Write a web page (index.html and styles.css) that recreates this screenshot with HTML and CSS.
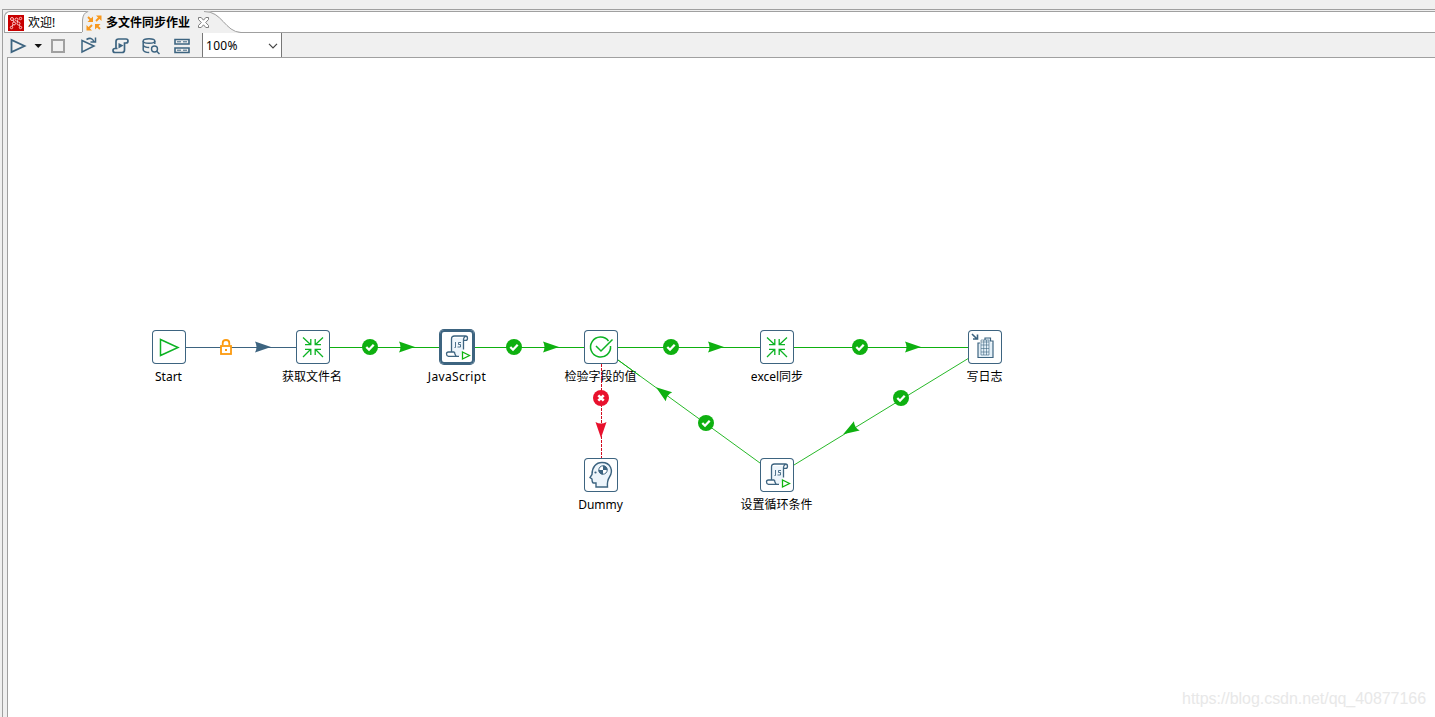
FILE: index.html
```html
<!DOCTYPE html>
<html lang="zh-CN">
<head>
<meta charset="utf-8">
<title>多文件同步作业</title>
<link rel="stylesheet" href="styles.css">
</head>
<body>
<svg class="defs" width="0" height="0">
  <defs>
    <symbol id="arrows-in" viewBox="0 0 34 34">
      <path class="green-stroke thin" d="M7 7.500l7.500 7M9 14.700h5.800V9M27 7.500l-7.500 7M25 14.700h-5.800V9M7 27l7.500-7.500M9 19.300h5.800V25M27 27l-7.500-7.500M25 19.300h-5.800V25"/>
    </symbol>
    <symbol id="js-script" viewBox="0 0 34 34">
      <path d="M12 8h11v13l-3 5h-5l-3-4z" fill="#edf5fb"/>
      <path class="blue-stroke thin" d="M11.500 21.500V9q0-3 3-3H25.500q2 0 2 2.200t-2 2.200h-2V9.500q0-1.800 1.800-3M23.500 10v9.500M14.500 22H8.500q-2 0-2 2t2 2.300H19M14.500 22q0 2 1.500 4"/>
      <path d="M15.500 12v5.500h-1M21 12.500h-2.500v2h2v2.500h-3" fill="none" stroke="#3d6480" stroke-width=".9"/>
      <path d="M22.500 22v7l7-3.500z" fill="#fff" stroke="#0db30d" stroke-width="1.300"/>
    </symbol>
    <symbol id="ok" viewBox="0 0 16 16">
      <circle cx="8" cy="8" r="8" fill="#0eb010"/>
      <path d="M4.300 8l2.700 2.700 4.700-5" fill="none" stroke="#fff" stroke-width="2.300"/>
    </symbol>
    <path id="head" d="M8 0L-8-5.500Q-5 0-8 5.500z"/>
  </defs>
</svg>
<div class="window">
  <div class="editor">
    <div class="tabs">
      <div class="tab tab-welcome">
        <svg width="16" height="16" viewBox="0 0 16 16"><path fill="#c80000" d="M0 0h16v16H0z"/><g fill="none" stroke="#ffc9c9"><circle cx="4" cy="4" r="1.500"/><circle cx="8.500" cy="4.500" r="1.500"/><circle cx="12.500" cy="3.500" r="1.200"/><circle cx="6" cy="8.500" r="1.500"/><circle cx="10.500" cy="8.500" r="1.500"/><circle cx="3.500" cy="12.500" r="1.200"/><circle cx="12.500" cy="12.500" r="1.200"/><path d="M5 9.500l-1 2M11 10l1 1.500M5 5l1 2M9 6l1 1"/></g></svg>
        <span>欢迎!</span>
      </div>
      <div class="tab tab-active">
        <svg class="tab-shape" width="165" height="22" viewBox="0 0 165 22"><path fill="#f0f0f0" d="M0 22V9Q1 0 8 0h116C141 0 143 21 159 21.500V22z"/><path fill="none" stroke="#a0a0a0" d="M.5 21V9Q1 2 6 .500M122 .500C140 0 143 21 159 21.500h6"/></svg>
        <svg class="tab-icon" width="16" height="16" viewBox="0 0 16 16"><path d="M2 2l4 4M10 6l4-4M6 10l-4 4M10 10l4 4" fill="none" stroke="#f8981d" stroke-width="1.900"/><path fill="#f8981d" d="M7 1.500V7H1.500zM10 .500h5.500V6zM.5 10v5.500H6zM9 9h5.500L9 14.500z"/></svg>
        <span class="tab-title">多文件同步作业</span>
        <svg class="tab-close" width="11" height="11" viewBox="0 0 11 11"><path fill="#fff" stroke="#707070" stroke-width=".9" d="M.5.500h2.700l2.300 2.700L7.800.500h2.700v2L7.700 5.500l2.800 3v2H7.800L5.500 7.800l-2.300 2.700H.5v-2l2.800-3L.5 2.500z"/></svg>
      </div>
    </div>
    <div class="toolbar">
      <svg class="tools" width="191" height="24" viewBox="0 0 191 24">
        <g fill="none" stroke="#3d6480" stroke-width="1.800">
          <path d="M4.500 7v12l13-6z"/>
          <path d="M75 7.500v11.500l12-6zM79.500 6.500q5-3 7.500 2M88.500 4.500v4.500h-5" stroke-width="1.500"/>
          <path d="M109 15.500V8.500q0-2.500 2.500-2.500H119q2 0 2 2t-2 2h-1.500v7q0 2.500-2.500 2.500h-7q-2 0-2-2t2-2h2.500" stroke-width="1.700"/>
          <ellipse cx="142" cy="8" rx="5.800" ry="2.300" stroke-width="1.500"/>
          <path d="M136.200 8v9q1 2.500 6 2.500M147.800 8v3M136.200 12q1 2.500 6 2.500" stroke-width="1.500"/>
          <circle cx="147.500" cy="16" r="3" stroke-width="1.400"/><path d="M149.500 18l3 3" stroke-width="1.500"/>
          <path d="M168 6.500h14v4.500h-14zM168 15h14v4.500h-14z" stroke-width="1.600"/>
          <path d="M170 8.800h4m2 0h4M170 17.200h4m2 0h4" stroke-width="1"/>
        </g>
        <path fill="#3d6480" d="M111.500 10l5 2.500-5 3z"/>
        <path fill="#111" d="M27.500 11h7.500l-3.750 4z"/>
        <path fill="none" stroke="#a0a0a0" stroke-width="2" d="M45 7h12v12H45z"/>
      </svg>
      <div class="zoom-box"><span>100%</span><svg width="10" height="6" viewBox="0 0 10 6"><path d="M1 .800l4 4 4-4" fill="none" stroke="#444" stroke-width="1.200"/></svg></div>
    </div>
    <div class="canvas">
      <svg class="hops" width="1427" height="659" viewBox="8 58 1427 659">
        <path d="M186 347.500H296" stroke="#3d6480"/>
        <path d="M330 347.500H440M474 347.500H584M618 347.500H760M794 347.500H968" stroke="#0eb010"/>
        <path d="M969 358L794 465M760 463L618 360" stroke="#0eb010" stroke-width=".9"/>
        <use href="#head" fill="#3d6480" transform="translate(263 347)"/>
        <g fill="#0eb010">
          <use href="#head" transform="translate(407 347)"/><use href="#head" transform="translate(551 347)"/>
          <use href="#head" transform="translate(716 347)"/><use href="#head" transform="translate(913 347)"/>
          <use href="#head" transform="translate(850 430) rotate(148.500)"/><use href="#head" transform="translate(662.500 392) rotate(216)"/>
        </g>
        <g><rect x="221" y="346" width="10" height="8" fill="#fff" stroke="#fc9a0e" stroke-width="1.800"/><path d="M222.700 345v-2q0-3 3.300-3t3.300 3v2" fill="none" stroke="#fc9a0e" stroke-width="1.800"/><path fill="#fc9a0e" d="M225 349h2v2h-2z"/></g>
        <use href="#ok" x="362" y="339" width="16" height="16"/><use href="#ok" x="506" y="339" width="16" height="16"/><use href="#ok" x="663" y="339" width="16" height="16"/><use href="#ok" x="852" y="339" width="16" height="16"/><use href="#ok" x="893" y="390" width="16" height="16"/><use href="#ok" x="698" y="415" width="16" height="16"/>
      </svg>
      <div class="node n-start"><svg class="box" viewBox="0 0 34 34"><path class="green-stroke" d="M8.500 9.500v16L26 17.500z"/></svg><span>Start</span></div>
      <div class="node n-files"><svg class="box"><use href="#arrows-in"/></svg><span>获取文件名</span></div>
      <div class="node n-js selected"><svg class="box"><use href="#js-script"/></svg><span>JavaScript</span></div>
      <div class="node n-check"><svg class="box" viewBox="0 0 34 34"><path class="green-stroke" d="M24.500 11A10 10 0 1 0 26.500 16M12 16l5 5L28.500 9.500"/></svg><span>检验字段的值</span></div>
      <div class="node n-excel"><svg class="box"><use href="#arrows-in"/></svg><span>excel同步</span></div>
      <div class="node n-log"><svg class="box" viewBox="0 0 34 34"><path d="M10 13h5l2-5h6v5h2v15H10z" fill="#e4f0f8"/><path d="M12 13h-2v14.500h15V11h-2.500V8H17v2" fill="none" stroke="#3d6480" stroke-width="1.200"/><g fill="none" stroke="#3d6480" stroke-width=".6"><path d="M13 12h8v13h-8zM13 15h8M13 18.500h8M13 22h8M15.700 10v15M18.500 10v15M13 12v-2h8v2"/></g><path d="M4 4l5 5M5 9h4.500V4.500" fill="none" stroke="#3d6480" stroke-width="1.600"/></svg><span>写日志</span></div>
      <div class="node n-dummy"><svg class="box" viewBox="0 0 34 34"><path d="M12 29v-4H9.500q-1.500 0-1.500-4l-2-1.500 2-3C8 9 12 4.500 18 4.500c9 0 11.500 8.500 7.500 14.500-2 3-2.500 5-2 10z" fill="#edf5fb" stroke="#3d6480" stroke-width="1.400"/><circle cx="19" cy="12" r="4.200" fill="#fff" stroke="#3d6480"/><path fill="#3d6480" d="M19 12V7.500A4.500 4.500 0 0 1 23.500 12zM19 12v4.500A4.500 4.500 0 0 1 14.500 12z"/><circle cx="11.500" cy="14.500" r="1.100" fill="#3d6480"/></svg><span>Dummy</span></div>
      <div class="node n-loop"><svg class="box"><use href="#js-script"/></svg><span>设置循环条件</span></div>
      <svg class="hops" width="1427" height="659" viewBox="8 58 1427 659">
        <path d="M601.500 364v94" stroke="#d20d20" stroke-dasharray="3 1"/>
        <path d="M618 360l22 16" stroke="#0eb010" stroke-width=".9"/>
        <circle cx="601" cy="398" r="8" fill="#e8112d"/><path d="M598.300 395.300l5.400 5.400m0-5.400l-5.400 5.400" stroke="#fff" stroke-width="2.600"/>
        <use href="#head" fill="#e8112d" transform="translate(601 430) rotate(90)"/>
      </svg>
      <div class="watermark">https://blog.csdn.net/qq_40877166</div>
    </div>
  </div>
</div>
</body>
</html>
```
FILE: styles.css
```css
* { box-sizing: border-box; }
body {
  margin: 0;
  overflow: hidden;
  background: #f0f0f0;
  color: #000;
  font: 12px/16px "Noto Sans", "Noto Sans CJK SC", sans-serif;
}
svg { display: block; flex: none; }
.defs { position: absolute; }
.window { height: 717px; padding: 9px 0 0 2px; }
.editor {
  height: 708px;
  border: 1px solid #a0a0a0;
  border-width: 1px 0 0 1px;
  padding: 1px 0 0 1px;
  display: flex;
  flex-direction: column;
}
.tabs {
  height: 22px;
  display: flex;
  background: #fff;
  border: 1px solid #a0a0a0;
  border-width: 1px 0 1px 1px;
  border-top-left-radius: 6px;
}
.tab { display: flex; align-items: center; white-space: nowrap; padding-top: 1px; }
.tab-welcome { width: 77px; padding-left: 3px; gap: 4px; }
.tab-active { position: relative; padding-left: 4px; gap: 4px; }
.tab-shape { position: absolute; left: 0; top: -1px; }
.tab-icon, .tab-title, .tab-close { position: relative; }
.tab-title { font-weight: 700; }
.tab-close { margin-left: 4px; }
.toolbar { height: 24px; display: flex; padding-left: 3px; }
.zoom-box {
  width: 80px;
  margin-left: 4px;
  border: 1px solid #777;
  border-width: 0 1px;
  background: #fff;
  display: flex;
  justify-content: space-between;
  align-items: center;
  padding: 1px 3px 0 3px;
  letter-spacing: .3px;
}
.canvas {
  position: relative;
  flex: 1;
  margin-left: 3px;
  background: #fff;
  border: 1px solid #a0a0a0;
  border-width: 1px 0 0 1px;
}
.hops { position: absolute; left: 0; top: 0; fill: none; }
.node {
  position: absolute;
  width: 120px;
  display: flex;
  flex-direction: column;
  align-items: center;
  gap: 5px;
  white-space: nowrap;
}
.node span { padding-right: 1px; }
.n-files span { padding-right: 2px; }
.n-js span, .n-excel span { padding-right: 0; }
.n-js span { letter-spacing: .35px; }
.box {
  width: 34px;
  height: 34px;
  background: #fff;
  border-radius: 4px;
  box-shadow: inset 0 0 0 1px #3d6480;
}
.selected .box { box-shadow: inset 0 0 0 2px #3d6480, 0 0 0 1px #3d6480; }
.green-stroke { fill: none; stroke: #0db324; stroke-width: 1.5; }
.blue-stroke { fill: none; stroke: #3d6480; }
.thin { stroke-width: 1.3; }
.n-start { left: 101px; top: 272px; }
.n-files { left: 245px; top: 272px; }
.n-js { left: 389px; top: 272px; }
.n-check { left: 533px; top: 272px; }
.n-excel { left: 709px; top: 272px; }
.n-log { left: 917px; top: 272px; }
.n-dummy { left: 533px; top: 400px; }
.n-loop { left: 709px; top: 400px; }
.watermark {
  position: absolute;
  right: 9px;
  bottom: 8px;
  font: 16px/20px "Liberation Sans", sans-serif;
  letter-spacing: -.05px;
  color: #e8e8e8;
}
```
